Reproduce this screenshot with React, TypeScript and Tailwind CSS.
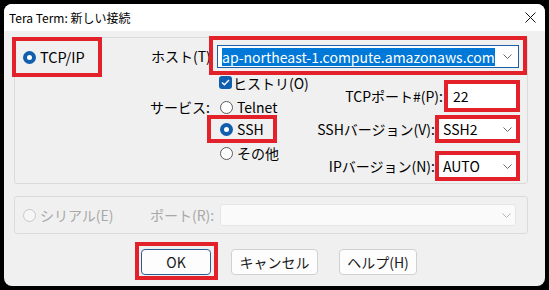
import React from "react";

const RED = "border-[#e3212b]";

function Chevron({ color = "#6b6b6b" }: { color?: string }) {
  return (
    <svg width="9" height="5" viewBox="0 0 9 5" fill="none">
      <path d="M0.5 0.5 L4.5 4.5 L8.5 0.5" stroke={color} strokeWidth="1" />
    </svg>
  );
}

function Radio({ checked, disabled }: { checked?: boolean; disabled?: boolean }) {
  if (checked) {
    return (
      <span className="w-[13px] h-[13px] rounded-full bg-[#0f5fae] flex items-center justify-center shrink-0">
        <span className="w-[5px] h-[5px] rounded-full bg-white" />
      </span>
    );
  }
  return (
    <span
      className={
        disabled
          ? "w-[13px] h-[13px] rounded-full border border-[#c8c8c8] bg-[#f6f6f6] shrink-0"
          : "w-[13px] h-[13px] rounded-full border border-[#5c5c5c] bg-white shrink-0"
      }
    />
  );
}

function Checkbox() {
  return (
    <span className="w-[13px] h-[13px] rounded-[3px] bg-[#0f5fae] flex items-center justify-center shrink-0">
      <svg width="9" height="7" viewBox="0 0 9 7" fill="none">
        <path d="M1 3.5 L3.4 5.8 L8 1" stroke="white" strokeWidth="1.4" />
      </svg>
    </span>
  );
}

function Button({ label, width, primary }: { label: string; width: string; primary?: boolean }) {
  return (
    <div
      className={`${width} h-[26px] rounded-[4px] bg-[#fdfdfd] border flex items-center justify-center text-[14px] leading-none text-[#1b1b1b] ${
        primary ? "border-[#2d5d8f]" : "border-[#d0d0d0]"
      }`}
    >
      {label}
    </div>
  );
}

export default function App() {
  return (
    <div className="w-[549px] h-[290px] bg-black pt-[4px] pl-[4px] font-['Noto_Sans_CJK_JP',sans-serif] text-black whitespace-nowrap text-[14px]">
      <div className="w-[541px] h-[282px] rounded-[8px] overflow-hidden flex flex-col bg-[#f0f0f0]">
        {/* title bar */}
        <div className="h-[27px] bg-white flex items-center pl-[5px] shrink-0">
          <span className="text-[12px] leading-none">Tera Term: 新しい接続</span>
          <div className="ml-auto w-[30px] h-[27px] flex items-center justify-center">
            <svg width="11" height="11" viewBox="0 0 11 11" fill="none">
              <path d="M0.5 0.5 L10.5 10.5 M10.5 0.5 L0.5 10.5" stroke="#111" strokeWidth="1" />
            </svg>
          </div>
        </div>

        <div className="flex-1 pt-[6px] pl-[10px]">
          {/* TCP/IP group */}
          <div className="w-[514px] h-[147px] border border-[#dadada] rounded-[3px] flex items-start">
            <div className={`-ml-[3px] -mt-[1px] w-[90px] h-[40px] border-4 ${RED} flex items-center pl-[7px] shrink-0`}>
              <Radio checked />
              <span className="ml-[4px] text-[14.5px] leading-none">TCP/IP</span>
            </div>

            <div className="ml-[49px] -mt-[2px] w-[376px] flex flex-col shrink-0">
              <div className="flex items-center">
                <span className="w-[58px] leading-none shrink-0">ホスト(T)</span>
                <div className={`w-[318px] h-[39px] border-4 ${RED} px-[4px] pt-[5px] pb-[3px] shrink-0`}>
                  <div className="h-[23px] border border-[#1a5fa8] bg-white flex items-center pl-[4px] pr-[6px]">
                    <span className="bg-[#0078d7] text-white text-[14px] leading-[18px] h-[18px]">
                      ap-northeast-1.compute.amazonaws.com
                    </span>
                    <span className="ml-auto">
                      <Chevron />
                    </span>
                  </div>
                </div>
              </div>

              <div className="-ml-[1px] pr-[7px] flex justify-between">
                <div className="flex flex-col">
                  <div className="mt-[1px] h-[13px] pl-[69px] flex items-center">
                    <Checkbox />
                    <span className="ml-[1px] leading-none">ヒストリ(O)</span>
                  </div>
                  <div className="mt-[10px] h-[16px] flex items-center">
                    <span className="w-[70px] leading-none shrink-0">サービス:</span>
                    <Radio />
                    <span className="ml-[4px] leading-none">Telnet</span>
                  </div>
                  <div className={`ml-[57px] w-[70px] h-[28px] border-4 ${RED} pl-[9px] flex items-center`}>
                    <Radio checked />
                    <span className="ml-[4px] leading-none">SSH</span>
                  </div>
                  <div className="mt-[2px] h-[16px] pl-[70px] flex items-center">
                    <Radio />
                    <span className="ml-[4px] leading-none">その他</span>
                  </div>
                </div>

                <div className="pt-[5px] flex flex-col items-end">
                  <div className="flex items-center">
                    <span className="mr-[1px] leading-none">TCPポート#(P):</span>
                    <div className={`w-[76px] h-[32px] border-4 ${RED} bg-white flex items-center pl-[5px] shrink-0`}>
                      <span className="leading-none">22</span>
                    </div>
                  </div>
                  <div className="mt-[3px] flex items-center">
                    <span className="leading-none">SSHバージョン(V):</span>
                    <div className={`w-[85px] h-[28px] border-4 ${RED} bg-white flex items-center pl-[4px] pr-[4px] shrink-0`}>
                      <span className="leading-none">SSH2</span>
                      <span className="ml-auto">
                        <Chevron />
                      </span>
                    </div>
                  </div>
                  <div className="mt-[8px] flex items-center">
                    <span className="leading-none">IPバージョン(N):</span>
                    <div className={`w-[85px] h-[30px] border-4 ${RED} bg-white flex items-center pl-[4px] pr-[4px] shrink-0`}>
                      <span className="leading-none">AUTO</span>
                      <span className="ml-auto">
                        <Chevron />
                      </span>
                    </div>
                  </div>
                </div>
              </div>
            </div>
          </div>

          {/* serial group */}
          <div className="mt-[12px] w-[514px] h-[38px] border border-[#dadada] rounded-[3px] flex items-center pl-[8px]">
            <div className="w-[127px] flex items-center shrink-0">
              <Radio disabled />
              <span className="ml-[4px] leading-none text-[#a8a8a8]">シリアル(E)</span>
            </div>
            <span className="w-[70px] leading-none text-[#a8a8a8] shrink-0">ポート(R):</span>
            <div className="w-[296px] h-[22px] rounded-[3px] bg-[#fafafa] border border-[#e6e6e6] flex items-center justify-end pr-[4px] shrink-0">
              <Chevron color="#b4b4b4" />
            </div>
          </div>

          {/* buttons */}
          <div className="mt-[8px] flex items-start">
            <div className={`ml-[121px] w-[83px] h-[38px] border-4 ${RED} pl-[2px] pt-[3px]`}>
              <Button label="OK" width="w-[70px]" primary />
            </div>
            <div className="ml-[13px] mt-[7px]">
              <Button label="キャンセル" width="w-[87px]" />
            </div>
            <div className="ml-[21px] mt-[7px]">
              <Button label="ヘルプ(H)" width="w-[78px]" />
            </div>
          </div>
        </div>
      </div>
    </div>
  );
}
